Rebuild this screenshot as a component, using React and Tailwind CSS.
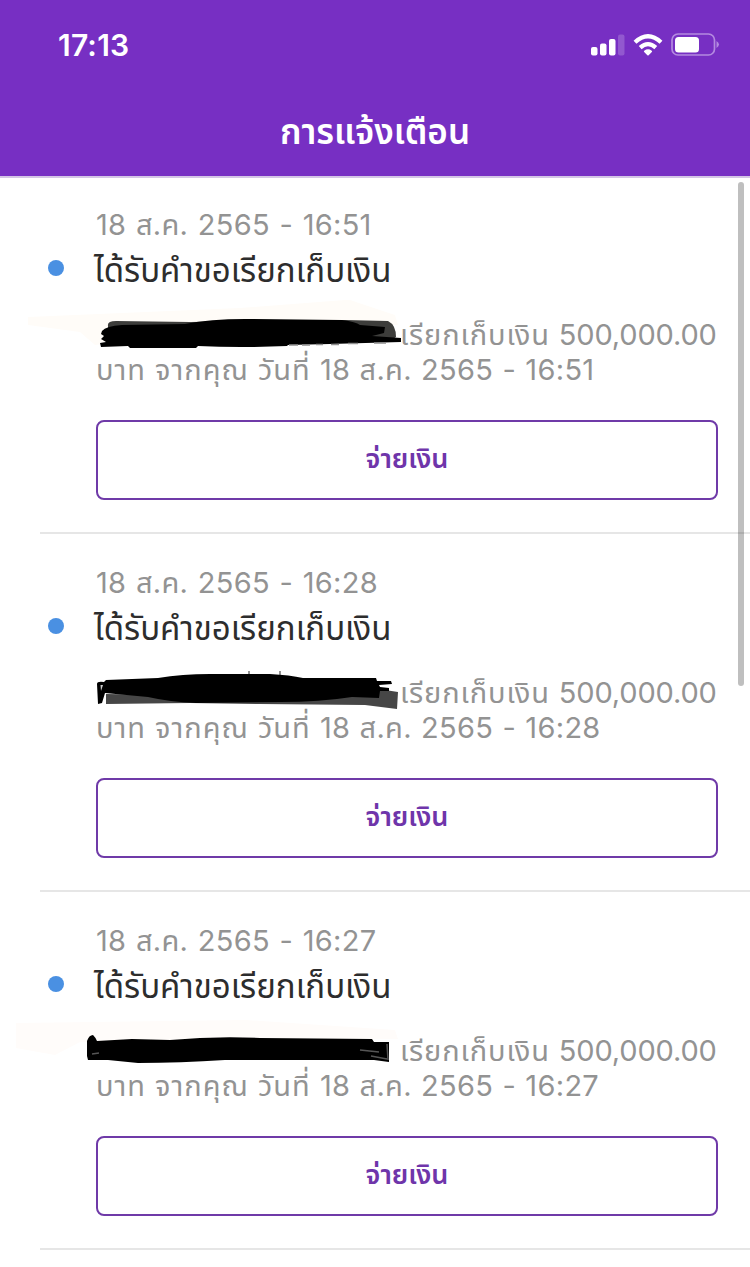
import React from 'react';

const notifications = [
  { id: 1, time: '16:51' },
  { id: 2, time: '16:28' },
  { id: 3, time: '16:27' },
];

const SignalIcon = () => (
  <svg width="34" height="22" viewBox="0 0 34 22" fill="#fff">
    <rect x="0" y="13" width="6.5" height="8.5" rx="2" />
    <rect x="9" y="9.5" width="6.5" height="12" rx="2" />
    <rect x="18" y="5" width="6.5" height="16.5" rx="2" />
    <rect x="27" y="0.5" width="6.5" height="21" rx="2" opacity="0.2" />
  </svg>
);

const WifiIcon = () => (
  <svg width="30" height="22" viewBox="0 0 30 22" fill="none" stroke="#fff" strokeWidth="4.2">
    <path d="M2 8.2 Q15 -3.8 28 8.2" />
    <path d="M7.2 13.6 Q15 6.6 22.8 13.6" />
    <path d="M11.8 17.4 Q15 15 18.2 17.4 L15 20.5 Z" fill="#fff" strokeWidth="1.8" strokeLinejoin="round" />
  </svg>
);

const BatteryIcon = () => (
  <svg width="49" height="24" viewBox="0 0 49 24">
    <rect x="1" y="1" width="42.5" height="21" rx="6" fill="none" stroke="#b48ae0" strokeWidth="1.7" />
    <rect x="4" y="4" width="24" height="15.5" rx="3.5" fill="#fff" />
    <path d="M45.5 8 Q50.5 11.5 45.5 15 Z" fill="#b48ae0" />
  </svg>
);

const Scribble = ({ id }) => (
  <svg className="absolute -left-24 top-0" width="410" height="60" viewBox="0 300 410 60">
    {id === 1 && (
      <g>
        <path d="M28 317 L240 308 L345 300 L350 300 L395 315 L398 325 L230 330 L95 345 L80 332 L28 325 Z" fill="#fffcf8" />
        <path d="M108 326 Q107 321 116 321 L190 322 L345 320 L388 321 Q396 325 396 337 L390 341 L108 341 Z" fill="#3d3d3b" />
        <path d="M102 331 Q106 326 122 325 L185 324 Q210 319 245 319 L342 320 Q356 322 360 325 L385 327 L384 333 L372 336 L401 338 L401 342 L330 344 L288 345 L287 346 Q240 348 198 346 L196 348 L130 348 L128 346 L101 347 L100 343 L106 342 L101 339 L104 336 L101 334 Z" fill="#000" />
        <path d="M289 345 h9 M302 345 h8 M316 344.5 h7 M331 344.5 h8 M348 343.5 h10 M374 343 h12" stroke="#8f8f8f" strokeWidth="1.5" />
      </g>
    )}
    {id === 2 && (
      <g transform="translate(0 -358)">
        <path d="M249 671 v4 M280 671 v5" stroke="#929292" strokeWidth="2" />
        <path d="M106 694 L230 696 L385 690 L398 692 L397 709 L365 705 L260 704 L190 703 L106 704 Z" fill="#464646" />
        <path d="M97 684 Q97 681 104 682 L106 680 L158 678 Q182 674 210 674 L270 674 Q290 675 303 678 L376 678 L377 681 L391 681 L392 684 L379 685 L380 687 L389 688 L389 691 L380 691 L379 698 L352 697 Q320 702 280 702 L196 703 Q170 702 148 697 L105 693 L102 703 L98 704 Z" fill="#000" />
        <path d="M100.5 685 L103 685 L101 691 Z" fill="#ccc" />
      </g>
    )}
    {id === 3 && (
      <g transform="translate(0 -716)">
        <path d="M16 1023 L245 1020 L395 1030 L398 1039 L80 1042 L55 1055 L16 1048 Z" fill="#fffcfa" />
        <path d="M87 1041 Q89 1035 93 1035 Q96 1038 97 1041 L132 1039 L170 1040 Q215 1036 260 1038 L372 1039 L374 1042 L389 1042 L389 1062 L374 1060 L268 1060 L225 1060 Q180 1063 138 1063 L108 1060 L88 1060 L87 1056 Z" fill="#000" />
        <path d="M92 1054 L99 1053 M360 1050 L379 1052 M387 1044 L388 1060 M371 1056 L387 1059" fill="none" stroke="#555" strokeWidth="1.5" />
      </g>
    )}
  </svg>
);

const NotificationItem = ({ id, time }) => (
  <div className="h-[358px] pl-10">
    <div className="flex h-full border-b-2 border-[#e6e6e6] pt-[31px] pl-2">
      <div className="mt-[53px] mr-8 size-4 shrink-0 rounded-full bg-[#4a90e2]" />
      <div className="w-[622px]">
        <p className="h-9 text-[29px] leading-9 tracking-[0.3px] [word-spacing:1.1px] whitespace-nowrap text-[#939393]">18 ส.ค. 2565 - {time}</p>
        <h2 className="-ml-0.5 h-[54px] text-[33px] leading-[54px] whitespace-nowrap text-[#2d2d2d]">ได้รับคำขอเรียกเก็บเงิน</h2>
        <div className="relative mt-5 h-[70px] text-[29px] leading-[35px] whitespace-nowrap text-[#939393]">
          <p className="h-[35px] pl-[304px]">
            <span className="tracking-[0.85px]">เรียกเก็บเงิน </span>
            <span className="tracking-[-0.15px]">500,000.00</span>
          </p>
          <p className="h-[35px]">
            <span className="tracking-[1px]">บาท จากคุณ วันที่ </span>
            <span className="tracking-[0.3px] [word-spacing:0.8px]">18 ส.ค. 2565 - {time}</span>
          </p>
          <div className="absolute -top-[17px] left-0">
            <Scribble id={id} />
          </div>
        </div>
        <button className="mt-[33px] block h-20 w-full rounded-lg border-2 border-[#6f3aa8] pb-0.5 text-[27px] font-semibold text-[#6f35aa]">
          จ่ายเงิน
        </button>
      </div>
    </div>
  </div>
);

const App = () => {
  return (
    <div className="relative h-[1267px] w-[750px] overflow-hidden bg-white font-['Inter','Noto_Sans_Thai','Noto_Sans',sans-serif]">
      <header className="relative z-10 h-44 bg-[#772fc3] text-white shadow-[0_2px_0_#d3c5e5]">
        <div className="flex h-[90px] items-center justify-between pr-[30px] pl-[58px]">
          <span className="pt-px text-[30px] font-semibold tracking-[0.2px]">17:13</span>
          <div className="flex items-center gap-2">
            <SignalIcon />
            <WifiIcon />
            <BatteryIcon />
          </div>
        </div>
        <h1 className="h-[86px] text-center text-[35px] leading-[82px] font-semibold">การแจ้งเตือน</h1>
      </header>
      <main>
        {notifications.map((item) => (
          <NotificationItem key={item.id} id={item.id} time={item.time} />
        ))}
      </main>
      <div className="absolute top-[182px] right-[6px] h-[504px] w-1.5 rounded-full bg-black/25" />
    </div>
  );
};

export default App;
